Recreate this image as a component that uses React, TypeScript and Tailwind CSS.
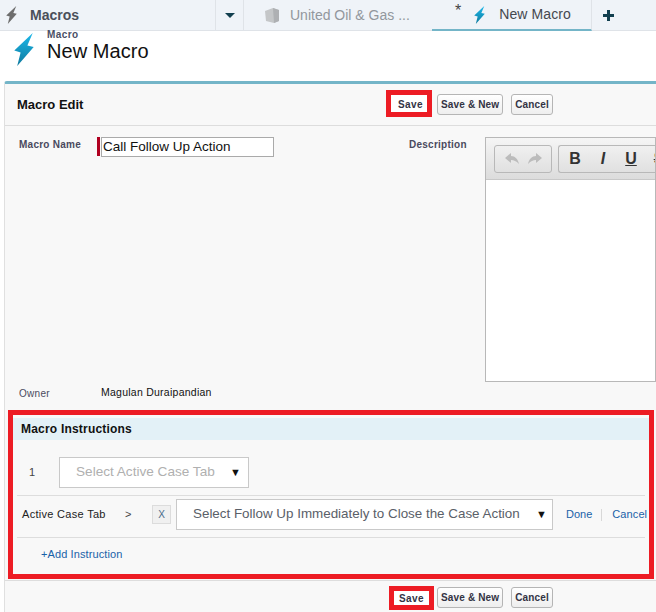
const BOLT = "M19 0 L0 18 L6.5 20 L3 34 L20 14.5 L13.5 13 Z";

function Bolt({ className, id }: { className: string; id: string }) {
  return (
    <svg viewBox="0 0 20 34" className={className}>
      <defs>
        <linearGradient id={id} x1="0" y1="0" x2="0" y2="1">
          <stop offset="0" stopColor="#1cb8ea" />
          <stop offset="1" stopColor="#0f7a9e" />
        </linearGradient>
      </defs>
      <path d={BOLT} fill={`url(#${id})`} />
    </svg>
  );
}

function Btn({ label }: { label: string }) {
  return (
    <button className="h-[21px] px-[3px] rounded-[3px] border border-[#b5b5b5] bg-gradient-to-b from-[#ffffff] to-[#eeeeee] text-[10px] font-bold tracking-[0.15px] text-[#333344] whitespace-nowrap">
      {label}
    </button>
  );
}

function Caret() {
  return <span className="text-[11px] leading-none text-[#111111]">▼</span>;
}

function OtherButtons() {
  return (
    <div className="flex gap-[8px]">
      <Btn label="Save & New" />
      <Btn label="Cancel" />
    </div>
  );
}

export default function App() {
  return (
    <div className="w-[656px] h-[612px] overflow-hidden bg-white font-['Liberation_Sans',Arial,sans-serif]">
      {/* tab bar */}
      <div className="flex h-[31px] bg-[#eff3f8] border-b border-[#dfe3e8]">
        <div className="flex items-center w-[216px] pl-[6px] border-r border-[#dfe3e8]">
          <svg viewBox="0 0 20 34" className="w-[11px] h-[18px]">
            <path d={BOLT} fill="#6d6d6d" />
          </svg>
          <span className="ml-[13px] text-[14px] font-bold text-[#4a4f5a]">Macros</span>
        </div>
        <div className="flex items-center justify-center w-[28px] border-r border-[#dfe3e8]">
          <svg viewBox="0 0 10 5" className="w-[10px] h-[5px]">
            <path d="M0 0 H10 L5 5 Z" fill="#123f4f" />
          </svg>
        </div>
        <div className="flex items-center w-[188px] pl-[21px]">
          <svg viewBox="0 0 14 15" className="w-[14px] h-[15px]">
            <path d="M0 3 L8 0 L14 2 V13 L9 15 L1 13 Z" fill="#c4c6c8" />
            <path d="M8 0 L14 2 V13 L9 15 Z" fill="#aeb0b3" />
          </svg>
          <span className="ml-[11px] text-[14px] text-[#92979d] whitespace-nowrap">United Oil &amp; Gas ...</span>
        </div>
        <div className="flex items-center w-[160px] h-[31px] pl-[23px] border-r border-[#dfe3e8] border-b-[2px] border-b-[#74b5c8]">
          <span className="text-[16px] leading-none text-[#444444] -mt-[8px]">*</span>
          <Bolt id="tabBolt" className="ml-[13px] w-[11px] h-[18px]" />
          <span className="ml-[14px] text-[14px] tracking-[0.1px] text-[#44484f] whitespace-nowrap">New Macro</span>
        </div>
        <div className="flex items-center pl-[11px]">
          <svg viewBox="0 0 11 11" className="w-[11px] h-[11px]">
            <path d="M4 0 H7 V4 H11 V7 H7 V11 H4 V7 H0 V4 H4 Z" fill="#123f4f" />
          </svg>
        </div>
      </div>

      {/* title */}
      <div className="flex h-[50px] pl-[14px]">
        <Bolt id="titleBolt" className="mt-[2px] w-[20px] h-[33px]" />
        <div className="ml-[13px]">
          <div className="text-[10px] leading-[8px] font-bold tracking-[0.4px] text-[#4a4f66]">Macro</div>
          <div className="text-[20px] leading-[24px] tracking-[0.05px] text-[#111111]">New Macro</div>
        </div>
      </div>

      {/* panel */}
      <div className="ml-[4px] h-[531px] border-t-[3px] border-t-[#74b5c8] border-l border-l-[#e0e0e0] rounded-tl-[3px] bg-[#f8f8f8]">
        <div className="flex items-center h-[42px] pl-[12px] border-b border-[#dddddd]">
          <span className="w-[369px] text-[13px] font-bold text-[#111111]">Macro Edit</span>
          <div className="flex items-center justify-center w-[46px] h-[27px] -mt-[3px] pl-[3px] pt-[2px] border-[5px] border-[#ed1c24] bg-white text-[10px] font-bold tracking-[0.4px] text-[#333344]">
            Save
          </div>
          <div className="ml-[5px]">
            <OtherButtons />
          </div>
        </div>

        {/* form */}
        <div className="flex h-[284px]">
          <div className="flex flex-col w-[480px] shrink-0">
            <div className="flex pt-[11px] pl-[14px]">
              <span className="w-[78px] text-[10px] font-bold tracking-[0.25px] text-[#4a4a5e]">Macro Name</span>
              <div className="w-[3px] h-[19px] bg-[#b00020]" />
              <div className="ml-[1px] w-[173px] h-[20px] border border-[#aaaaaa] bg-white pl-[1px] text-[13.5px] leading-[18px] text-[#111111] whitespace-nowrap">
                Call Follow Up Action
              </div>
              <span className="ml-[135px] text-[10px] font-bold tracking-[0.25px] text-[#4a4a5e] whitespace-nowrap">Description</span>
            </div>
            <div className="mt-auto flex items-center h-[28px] pl-[14px] pb-[6px]">
              <span className="w-[82px] text-[10px] tracking-[0.3px] text-[#4a4a5e]">Owner</span>
              <span className="text-[10.5px] tracking-[0.25px] text-[#111111]">Magulan Duraipandian</span>
            </div>
          </div>
          <div className="mt-[11px] w-[171px] h-[245px] shrink-0 border border-[#b8b8b8] bg-white overflow-hidden">
            <div className="flex items-center gap-[6px] h-[42px] pl-[8px] border-b border-[#c8c8c8] bg-gradient-to-b from-[#f5f5f5] to-[#dcdcdc]">
              <div className="flex items-center justify-around w-[58px] h-[28px] px-[5px] rounded-[3px] border border-[#b8b8b8] shrink-0">
                <svg viewBox="0 0 14 11" className="w-[14px] h-[11px]">
                  <path d="M6 0 L0 5 L6 10 V7 C9 7 11 8 14 11 C13 6 10 3 6 3 Z" fill="#bcbcbc" />
                </svg>
                <svg viewBox="0 0 14 11" className="w-[14px] h-[11px]">
                  <path d="M8 0 L14 5 L8 10 V7 C5 7 3 8 0 11 C1 6 4 3 8 3 Z" fill="#bcbcbc" />
                </svg>
              </div>
              <div className="flex items-center w-[120px] h-[28px] pl-[2px] rounded-l-[3px] border border-r-0 border-[#b8b8b8] text-[16px] font-bold text-[#333333] shrink-0">
                <span className="w-[28px] shrink-0 text-center">B</span>
                <span className="w-[28px] shrink-0 text-center italic">I</span>
                <span className="w-[28px] shrink-0 text-center underline">U</span>
                <span className="w-[28px] shrink-0 text-center line-through">S</span>
              </div>
            </div>
          </div>
        </div>

        {/* instructions */}
        <div className="ml-[3px] w-[646px] h-[169px] border-[5px] border-[#ed1c24]">
          <div className="mt-[3px] flex items-center h-[22px] pl-[8px] bg-[#e3f1f7] text-[12px] font-bold tracking-[0.2px] text-[#111111]">
            Macro Instructions
          </div>
          <div className="flex items-start h-[56px] mx-[4px] pt-[17px] border-b border-[#dddddd]">
            <span className="w-[42px] pl-[12px] pt-[7px] text-[11px] text-[#444444]">1</span>
            <div className="flex items-center justify-between w-[190px] h-[31px] pl-[16px] pr-[7px] border border-[#c9c9c9] bg-white text-[13.6px] text-[#b0b0b0] whitespace-nowrap">
              <span>Select Active Case Tab</span>
              <Caret />
            </div>
          </div>
          <div className="flex items-center h-[42px] mx-[4px] pb-[4px] border-b border-[#dddddd]">
            <span className="ml-[5px] w-[103px] shrink-0 text-[11px] tracking-[0.3px] text-[#222222]">Active Case Tab</span>
            <span className="w-[27px] shrink-0 text-[11px] text-[#444444]">&gt;</span>
            <div className="flex items-center justify-center shrink-0 w-[19px] h-[19px] border border-[#dcdcdc] bg-[#f0f0f0] text-[10px] text-[#4a6a8a]">X</div>
            <div className="ml-[5px] flex items-center justify-between shrink-0 w-[377px] h-[31px] pl-[16px] pr-[5px] border border-[#c9c9c9] bg-white text-[13.4px] text-[#5a6068] whitespace-nowrap">
              <span>Select Follow Up Immediately to Close the Case Action</span>
              <Caret />
            </div>
            <span className="ml-[13px] shrink-0 text-[11px] text-[#1a62a8]">Done</span>
            <div className="ml-[9px] w-px h-[12px] shrink-0 bg-[#d8d8d8]" />
            <span className="ml-[10px] shrink-0 text-[11px] tracking-[0.1px] text-[#1a62a8]">Cancel</span>
          </div>
          <div className="flex items-center h-[32px] pl-[28px] text-[11px] tracking-[0.1px] text-[#1a62a8]">+Add Instruction</div>
        </div>

        {/* footer */}
        <div className="flex items-start mt-[1px] pt-[5px] pl-[384px] border-t border-[#dddddd] h-[32px]">
          <div className="flex items-center justify-center w-[45px] h-[24px] border-[5px] border-[#ed1c24] bg-white text-[10px] font-bold tracking-[0.4px] text-[#333344]">
            Save
          </div>
          <div className="ml-[3px] mt-[1px]">
            <OtherButtons />
          </div>
        </div>
      </div>
    </div>
  );
}
